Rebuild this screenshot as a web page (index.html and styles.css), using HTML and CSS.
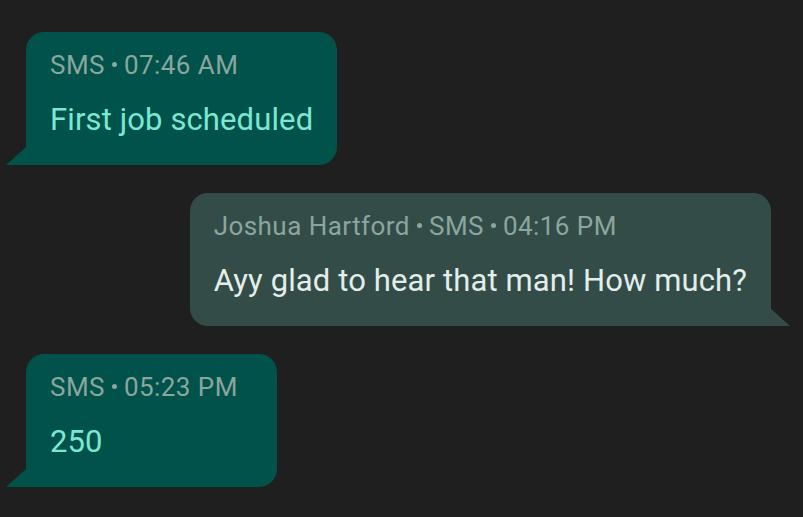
FILE: index.html
```html
<!DOCTYPE html>
<html lang="en">
<head>
<meta charset="utf-8">
<title>Messages</title>
<link rel="stylesheet" href="styles.css">
</head>
<body>
<main class="thread">
  <div class="msg msg-out">
    <div class="bubble bubble-out">
      <div class="meta">SMS<span class="dot"></span>07:46 AM</div>
      <div class="body">First job scheduled</div>
    </div>
  </div>
  <div class="msg msg-in">
    <div class="bubble bubble-in">
      <div class="meta">Joshua Hartford<span class="dot"></span>SMS<span class="dot"></span>04:16 PM</div>
      <div class="body">Ayy glad to hear that man! How much?</div>
    </div>
  </div>
  <div class="msg msg-out">
    <div class="bubble bubble-out">
      <div class="meta">SMS<span class="dot"></span>05:23 PM</div>
      <div class="body">250</div>
    </div>
  </div>
</main>
</body>
</html>
```
FILE: styles.css
```css
html, body {
  margin: 0;
  padding: 0;
  background: #1e1f1e;
  height: 100%;
}
body {
  font-family: Roboto, "Liberation Sans", sans-serif;
}
.thread {
  display: flex;
  flex-direction: column;
  gap: 28px;
  padding: 32px 32px 0 26px;
}
.msg {
  display: flex;
}
.msg-out { justify-content: flex-start; }
.msg-in { justify-content: flex-end; }
.bubble {
  position: relative;
  box-sizing: border-box;
  min-width: 251px;
  padding: 18px 24px 27px 24px;
  border-radius: 18px;
}
.bubble-out {
  background: #00524a;
  border-bottom-left-radius: 0;
}
.bubble-in {
  background: #344c47;
  border-bottom-right-radius: 0;
}
.bubble::after {
  content: "";
  position: absolute;
  bottom: 0;
  width: 20px;
  height: 18px;
  background: inherit;
}
.bubble-out::after {
  left: -20px;
  clip-path: polygon(100% 0, 100% 100%, 0 100%);
}
.bubble-in::after {
  right: -19px;
  clip-path: polygon(0 0, 100% 100%, 0 100%);
}
.meta {
  font-size: 26px;
  line-height: 30px;
  letter-spacing: 0.45px;
  color: #8ba59f;
  white-space: nowrap;
}
.dot {
  display: inline-block;
  width: 5px;
  height: 5px;
  border-radius: 50%;
  background: currentColor;
  margin: 0 7px 0 7px;
  vertical-align: 7px;
}
.body {
  margin-top: 22px;
  font-size: 31px;
  line-height: 36px;
  letter-spacing: 0.12px;
  white-space: nowrap;
}
.bubble-out .body { color: #7de8d2; }
.bubble-in .body { color: #e1eeeb; }
```
